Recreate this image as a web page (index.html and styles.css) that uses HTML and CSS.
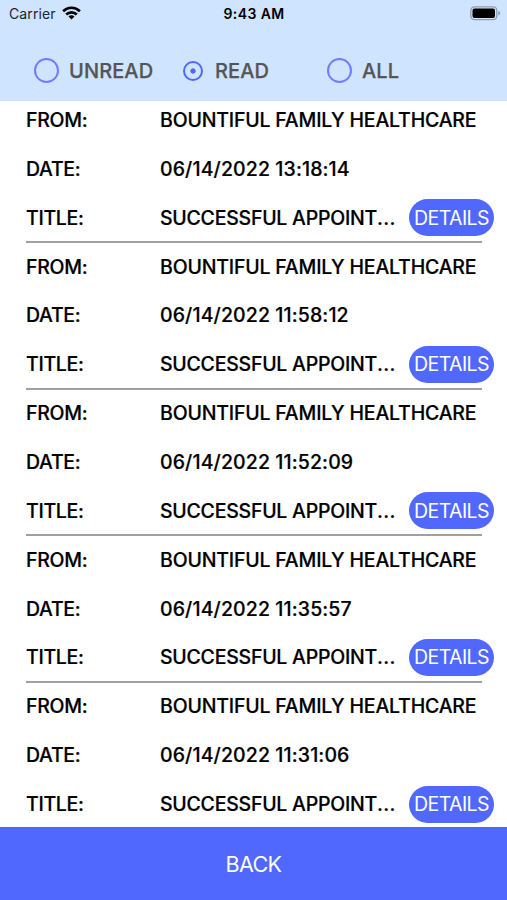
FILE: index.html
```html
<!DOCTYPE html>
<html lang="en">
<head>
<meta charset="utf-8">
<title>Messages</title>
<link rel="stylesheet" href="styles.css">
</head>
<body>
<div class="screen">
  <header class="header">
    <div class="status">
      <div class="carrier"><span>Carrier</span>
        <svg class="wifi" width="19" height="14" viewBox="0 0 19 14" fill="none" stroke="#000" stroke-width="2.7"><path d="M1.1 5.2a12 12 0 0 1 16.8 0M4.2 8.5a7.6 7.6 0 0 1 10.6 0"/><path d="M9.5 13.5 6.5 10.5a4.2 4.2 0 0 1 6 0z" fill="#000" stroke="none"/></svg>
      </div>
      <div class="clock">9:43 AM</div>
      <svg class="battery" width="31" height="15" viewBox="0 0 31 15"><rect x=".8" y=".8" width="26" height="12.9" rx="3.6" fill="none" stroke="#8c9db2" stroke-width="1.3"/><rect x="2.5" y="2.5" width="22.5" height="9.5" rx="2" fill="#000"/><path d="M28.4 5v4.6q1.7-.6 1.7-2.3T28.4 5z" fill="#8798ad"/></svg>
    </div>
    <div class="filters">
      <label class="filter unread"><i class="radio"></i><span>UNREAD</span></label>
      <label class="filter read"><i class="radio checked"></i><span>READ</span></label>
      <label class="filter all"><i class="radio"></i><span>ALL</span></label>
    </div>
  </header>
  <main class="list">
    <article class="message">
      <div class="row"><b>FROM:</b><span class="sender">BOUNTIFUL FAMILY HEALTHCARE</span></div>
      <div class="row"><b>DATE:</b><span class="date">06/14/2022 13:18:14</span></div>
      <div class="row"><b>TITLE:</b><span class="title">SUCCESSFUL APPOINT<span class="dots">...</span></span><button class="details">DETAILS</button></div>
    </article>
    <article class="message">
      <div class="row"><b>FROM:</b><span class="sender">BOUNTIFUL FAMILY HEALTHCARE</span></div>
      <div class="row"><b>DATE:</b><span class="date">06/14/2022 11:58:12</span></div>
      <div class="row"><b>TITLE:</b><span class="title">SUCCESSFUL APPOINT<span class="dots">...</span></span><button class="details">DETAILS</button></div>
    </article>
    <article class="message">
      <div class="row"><b>FROM:</b><span class="sender">BOUNTIFUL FAMILY HEALTHCARE</span></div>
      <div class="row"><b>DATE:</b><span class="date">06/14/2022 11:52:09</span></div>
      <div class="row"><b>TITLE:</b><span class="title">SUCCESSFUL APPOINT<span class="dots">...</span></span><button class="details">DETAILS</button></div>
    </article>
    <article class="message">
      <div class="row"><b>FROM:</b><span class="sender">BOUNTIFUL FAMILY HEALTHCARE</span></div>
      <div class="row"><b>DATE:</b><span class="date">06/14/2022 11:35:57</span></div>
      <div class="row"><b>TITLE:</b><span class="title">SUCCESSFUL APPOINT<span class="dots">...</span></span><button class="details">DETAILS</button></div>
    </article>
    <article class="message">
      <div class="row"><b>FROM:</b><span class="sender">BOUNTIFUL FAMILY HEALTHCARE</span></div>
      <div class="row"><b>DATE:</b><span class="date">06/14/2022 11:31:06</span></div>
      <div class="row"><b>TITLE:</b><span class="title">SUCCESSFUL APPOINT<span class="dots">...</span></span><button class="details">DETAILS</button></div>
    </article>
  </main>
  <button class="back">BACK</button>
</div>
</body>
</html>
```
FILE: styles.css
```css
* { box-sizing: border-box; }
body { margin: 0; font-family: Inter, "Liberation Sans", sans-serif; background: #fff; }
.screen { width: 507px; height: 900px; display: flex; flex-direction: column; overflow: hidden; }
button { font-family: inherit; border: 0; padding: 0; color: #fff; background: #5168ff; }
.header { height: 101px; flex: none; background: #cee4ff; }
.status { height: 27px; display: grid; grid-template-columns: 1fr auto 1fr; align-items: center; padding: 0 6px 0 9px; }
.carrier { display: flex; align-items: center; gap: 6px; font-size: 14px; letter-spacing: .1px; color: #1c2530; }
.wifi { margin-top: -1px; }
.clock { font-size: 14px; font-weight: 600; letter-spacing: .4px; margin-left: -2px; color: #000; }
.battery { justify-self: end; }
.filters { display: flex; height: 74px; padding: 7px 0 0 34px; }
.filter { display: flex; align-items: center; height: 74px; font-size: 20px; font-weight: 500; letter-spacing: .1px; color: #555; white-space: nowrap; -webkit-text-stroke: .25px #555; }
.unread { width: 148px; }
.read { width: 145px; }
.radio { width: 25px; height: 25px; flex: none; margin-top: -1px; border: 2px solid #6f7dff; border-radius: 50%; margin-right: 10px; }
.radio.checked { width: 20px; height: 20px; border-color: #5168ff; margin: 0 12px 0 1px; background: radial-gradient(circle, #5168ff 2.3px, transparent 3px); }
.list { height: 726px; flex: none; overflow: hidden; }
.message { position: relative; height: 146.6px; padding-left: 26px; }
.message:first-child { margin-top: -5.5px; }
.message::after { content: ""; position: absolute; left: 26px; width: 456px; bottom: -1px; height: 2px; background: #a0a0a0; }
.message:last-child::after { display: none; }
.row { display: flex; align-items: center; height: 48.86px; font-size: 19.5px; font-weight: 500; color: #000; white-space: nowrap; -webkit-text-stroke: .2px #000; }
.row b { width: 134px; flex: none; font-weight: 500; letter-spacing: -.3px; }
.sender { letter-spacing: -.18px; }
.date { letter-spacing: .12px; }
.title { width: 249px; flex: none; letter-spacing: -.24px; }
.dots { letter-spacing: .3px; }
.details { width: 85px; height: 37px; flex: none; border-radius: 18.5px; font-size: 19.5px; letter-spacing: -.6px; -webkit-text-stroke: 0; }
.back { height: 73px; flex: none; font-size: 21.5px; letter-spacing: -.6px; }
```
